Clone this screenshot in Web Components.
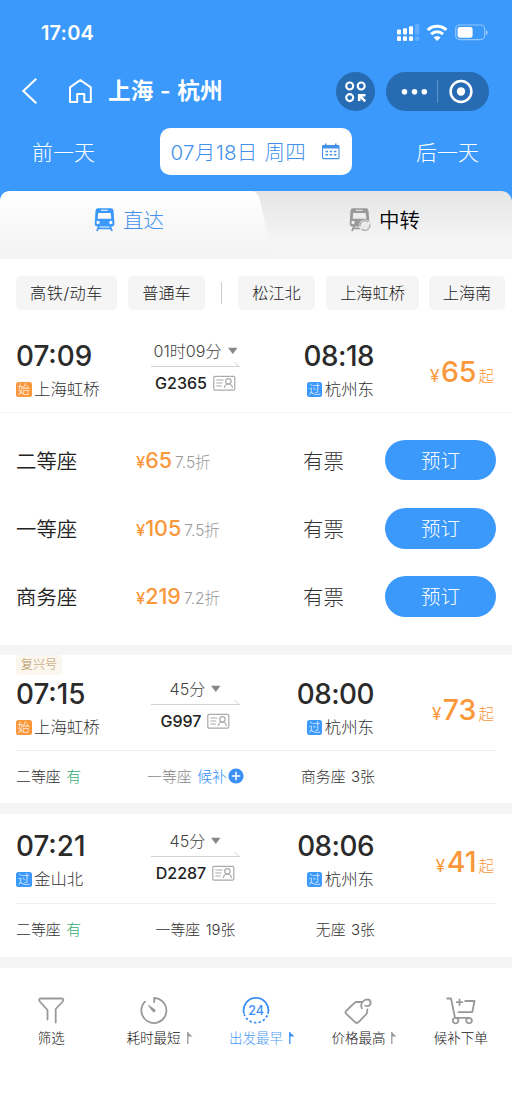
<!DOCTYPE html>
<html lang="zh-CN">
<head>
<meta charset="utf-8">
<title>上海 - 杭州</title>
<style>
html,body{margin:0;padding:0;background:#fff}
body{width:512px;height:1108px;overflow:hidden;font-family:"Inter","Noto Sans CJK SC",sans-serif;font-weight:300;color:#333;--blue:#3b99fc;--orange:#fa973b}
</style>
</head>
<body>
<ticket-page></ticket-page>
<script>
const define = (name, html) => customElements.define(name, class extends HTMLElement {
  constructor() {
    super();
    this.attachShadow({mode: 'open'});
  }
  connectedCallback() {
    const t = document.createElement('template');
    t.innerHTML = '<style>:host{display:block;box-sizing:border-box;white-space:nowrap}*{box-sizing:border-box}svg{display:block;flex:none}</style>' + (typeof html === 'function' ? html(this) : html);
    this.shadowRoot.replaceChildren(t.content.cloneNode(true));
  }
});

define('status-bar', `
<style>
:host{display:flex;height:66px;align-items:center;justify-content:space-between;padding:0 24px 0 41px;color:#fff}
b{font-size:20px;font-weight:600;letter-spacing:.15px}
</style>
<b>17:04</b>
<svg width="92" height="20" viewBox="396 23 92 20">
 <g fill="#fff"><rect x="397" y="29.5" width="4" height="5" rx="1"/><rect x="403" y="28.3" width="4" height="6.2" rx="1"/><rect x="409" y="26.3" width="4" height="8.2" rx="1"/><rect x="397" y="36.3" width="4" height="4.7" rx="1"/><rect x="403" y="36.3" width="4" height="4.7" rx="1"/><rect x="409" y="36.3" width="4" height="4.7" rx="1"/>
 <g opacity=".2"><rect x="415" y="24.3" width="4.3" height="10.2" rx="1"/><rect x="415" y="36.3" width="4.3" height="4.7" rx="1.5"/></g></g>
 <g fill="none" stroke="#fff" stroke-width="3"><path d="M427.8 30a13.3 13.3 0 0 1 18.6 0"/><path d="M431.2 34.1a8.6 8.6 0 0 1 11.8 0"/></g><path d="M433.6 37.6a5 5 0 0 1 7 0L437.1 41z" fill="#fff"/>
 <rect x="455.7" y="25" width="29" height="14.6" rx="4" fill="none" stroke="#fff" stroke-opacity=".45" stroke-width="1.2"/><rect x="457.6" y="27" width="15" height="10.7" rx="2.3" fill="#fff"/><path d="M486 30v5q1.7-.6 1.7-2.5T486 30" fill="#fff" opacity=".5"/>
</svg>`);

define('title-bar', `
<style>
:host{display:flex;height:50px;align-items:center;padding:0 23px 0 20px;color:#fff}
b{font-size:22.7px;font-weight:600;margin-left:15px;flex:1;line-height:50px;word-spacing:1px}
.round{width:39px;height:39px;border-radius:50%;background:#276bb3;margin-right:11px}
.caps{width:103px;height:39px;border-radius:20px;background:#276bb3}
</style>
<svg width="20" height="28" viewBox="0 0 20 28"><path d="M16.3 1.8 3.3 14 16.3 26.3" fill="none" stroke="#fff" stroke-width="2.1"/></svg>
<svg style="margin-left:27px" width="26" height="28" viewBox="67 77 26 28"><path d="M70 87.4 80.3 80 90.8 87.4V102H84.3V94H77.2V102H70Z" fill="none" stroke="#fff" stroke-width="2" stroke-linejoin="round"/></svg>
<b>上海 - 杭州</b>
<svg class="round" viewBox="0 0 39 39"><g fill="none" stroke="#fff" stroke-width="2.1"><circle cx="13.7" cy="14" r="3.5"/><circle cx="25.2" cy="14" r="3.5"/><circle cx="13.7" cy="25.6" r="3.5"/><path stroke-width="2.6" d="M23.2 29v-5.8H29.5M23.2 23.2l6 6.2"/></g></svg>
<svg class="caps" viewBox="0 0 103 39"><g fill="#fff"><circle cx="18.5" cy="19.7" r="2.8"/><circle cx="28.5" cy="19.7" r="2.8"/><circle cx="38.3" cy="19.7" r="2.8"/><circle cx="75" cy="19.5" r="4.2"/></g><circle cx="75" cy="19.5" r="10.4" fill="none" stroke="#fff" stroke-width="2.5"/><path d="M51.5 8v23" stroke="#5e93ca" stroke-width="1"/></svg>`);

define('date-bar', `
<style>
:host{display:flex;height:47px;margin-top:12px;align-items:center;justify-content:space-between;padding:0 33px 0 32px;color:#fff;font-size:21px}
.box{width:192px;height:47px;border-radius:10px;background:#fff;color:#4391ea;display:flex;align-items:center;padding-left:10.5px;font-size:20.5px;margin-left:1px;letter-spacing:.3px;word-spacing:.8px}
span{padding-bottom:2px}
svg{margin-left:15px}
</style>
<span>前一天</span>
<div class="box"><span>07月18日 周四</span>
<svg width="20" height="18" viewBox="0 0 20 18"><rect x="1.5" y="2.6" width="16.5" height="13" rx="1" fill="none" stroke="#4391ea" stroke-width="1.1"/><path d="M1.5 2.5h16.5v3H1.5z" fill="#4391ea"/><path d="M4.7.5v3M14.8.5v3" stroke="#4391ea" stroke-width="1.5"/><path d="M4.5 8.6h11M4.5 11.8h11" stroke="#4391ea" stroke-width="1.5" stroke-dasharray="2.5 1.7"/></svg></div>
<span>后一天</span>`);

define('route-tabs', `
<style>
:host{display:flex;height:68px;background:linear-gradient(#e5e5e5,#f5f5f5 76%);border-radius:11px 11px 0 0;position:relative}
.shape{position:absolute;left:0;top:0}
div{position:relative;width:256px;height:56px;display:flex;align-items:center;padding-left:93px;font-size:20.5px;color:#000;font-weight:350}
div.on{color:#4391ea;font-weight:300}
span{margin-left:7px;padding-bottom:1px}
</style>
<svg class="shape" width="270" height="68"><defs><linearGradient id="g" x2="0" y2="1"><stop stop-color="#fff"/><stop offset=".82" stop-color="#f4f4f4"/></linearGradient></defs><path d="M0 68V11Q0 0 11 0H250Q258 0 260 9L267 42Q269 49 270 51V68Z" fill="url(#g)"/></svg>
<div class="on"><svg width="23" height="26" viewBox="93 206 23 26"><path fill-rule="evenodd" fill="#3b99fc" d="M98 208.3h13q2.3 0 2.5 2.4l1 13.4q0 2.4-2.4 2.4H97q-2.4 0-2.3-2.4l.8-13.4q.2-2.4 2.5-2.4M101 209.7v1h6.8v-1ZM98.2 213l-.5 5.8h13.6l-.6-5.8ZM98 220.8a1.7 1.7 0 1 0 .1 3.4a1.7 1.7 0 1 0-.1-3.4m12.8 0a1.7 1.7 0 1 0 .1 3.4a1.7 1.7 0 1 0-.1-3.4"/><path d="M99 226l-2 5M110 226l2 5M98.5 228.3h12" stroke="#3b99fc" stroke-width="1.8"/></svg><span>直达</span></div>
<div><svg width="23" height="26" viewBox="94 206 23 26"><path fill-rule="evenodd" fill="#999" d="M98 208.3h13q2.3 0 2.5 2.4l1 13.4q0 2.4-2.4 2.4H97q-2.4 0-2.3-2.4l.8-13.4q.2-2.4 2.5-2.4M101 209.7v1h6.8v-1ZM98.2 213l-.5 5.8h13.6l-.6-5.8ZM98 220.8a1.7 1.7 0 1 0 .1 3.4a1.7 1.7 0 1 0-.1-3.4"/><path d="M99 226l-2 5M98.5 228.3h12" stroke="#999" stroke-width="1.8"/><circle cx="110" cy="225.5" r="6" fill="#e9e9e9"/><path d="M105.2 226.5a4.8 4.8 0 0 1 8-4.5M114.7 224.5a4.8 4.8 0 0 1-8 4.5" fill="none" stroke="#aaa" stroke-width="1.3"/></svg><span>中转</span></div>`);

define('filter-chips', `
<style>
:host{display:flex;height:59px;padding:17px 0 8px 16px;background:#fff}
span{height:34px;line-height:34px;border-radius:5px;background:#f5f5f5;font-size:16.2px;text-align:center;flex:none;margin-right:11px;color:#222}
i{flex:none;width:1px;height:22px;background:#ccc;margin:6px 16px 0 5px}
</style>
<span style="width:101px;letter-spacing:.5px">高铁/动车</span><span style="width:77px">普通车</span><i></i><span style="width:77px">松江北</span><span style="width:93px;margin-right:10px">上海虹桥</span><span style="width:76px">上海南</span>`);

define('station-name', el => `
<style>
:host{display:flex;align-items:center;font-size:16.4px;line-height:24px;color:#333}
i{font-style:normal;width:15.5px;height:15.5px;border-radius:2.5px;background:${el.getAttribute('kind') === '始' ? 'var(--orange)' : 'var(--blue)'};color:#fff;font-size:12px;line-height:16px;text-align:center;margin:1px 2.5px 0 0}
</style><i>${el.getAttribute('kind')}</i><slot></slot>`);

define('train-info', el => {
  const a = n => el.getAttribute(n);
  return `
<style>
:host{display:grid;grid-template-columns:135px 89px 135px 121px;height:94px;padding:0 16px}
.t{font-size:27.8px;font-weight:500;line-height:36px;color:#2b2b2b;margin-top:20px;height:36px}
.end .t{letter-spacing:-.5px}
.end{display:flex;flex-direction:column;align-items:flex-end;padding-right:1px}
station-name{margin-top:3px}
.mid{display:flex;flex-direction:column;align-items:center;margin-top:20px}
.d{font-size:16.1px;line-height:26px;height:26px;display:flex;align-items:center;color:#444}
.d svg{margin-left:6px}
.line{margin-top:-2px}
.n{font-size:16px;font-weight:500;line-height:26px;display:flex;align-items:center;color:#222;margin-top:2px}
.n svg{margin-left:6px}
.p{display:flex;align-items:baseline;justify-content:flex-end;color:var(--orange);padding:36px 2px 0 0;line-height:36px}
.p b{font-weight:500;font-size:28.5px;margin:0 2px 0 1.5px}.p i{font-style:normal;font-size:17px;font-weight:400}.p span{font-size:15.5px}
</style>
<div><div class="t">${a('from-time')}</div><station-name kind="${a('from-kind')}">${a('from')}</station-name></div>
<div class="mid"><div class="d">${a('duration')}<svg width="10" height="8"><path d="M0 .8h9.5L4.8 7z" fill="#888"/></svg></div>
<svg class="line" width="89" height="6"><path d="M0 4.5h88.5M83.5.5l5 4" fill="none" stroke="#d2d2d2"/></svg>
<div class="n">${a('no')}<svg width="23" height="17" viewBox="0 0 23 17"><g fill="none" stroke="#aaa" stroke-width="1.2"><rect x=".8" y="1.3" width="21" height="13.8" rx="1.3"/><path d="M3.3 5h7.2M3.3 8h6M3.3 11h5.5"/><circle cx="15.4" cy="6.3" r="2.7"/><path d="M11.3 13q.4-3.6 4.1-4 3.7.4 4.1 4"/></g></svg></div></div>
<div class="end"><div class="t">${a('to-time')}</div><station-name kind="过">${a('to')}</station-name></div>
<div class="p"><i>¥</i><b>${a('price')}</b><span>起</span></div>`;
});

define('seat-row', el => `
<style>
:host{display:flex;height:68.3px;align-items:center;padding:0 16px;font-size:20.4px;color:#222}
.name{width:120px;font-weight:350;padding-bottom:1px}.price{width:167px;display:flex;align-items:baseline;color:var(--orange);padding-bottom:1px}
.price i{font-style:normal;font-size:16.5px;font-weight:500}.price b{font-size:21.5px;font-weight:500}
.price span{font-size:15.5px;color:#999;margin-left:3px}
.left{width:82px;color:#333;padding-bottom:1px}
button{all:unset;width:111px;height:40.5px;border-radius:21px;background:var(--blue);color:#fff;font-size:19.5px;text-align:center;line-height:42px}
</style>
<div class="name">${el.getAttribute('name')}</div><div class="price"><i>¥</i><b>${el.getAttribute('price')}</b><span>${el.getAttribute('off')}</span></div><div class="left">有票</div><button>预订</button>`);

define('seat-summary', `
<style>
:host{display:grid;grid-template-columns:135px 89px 135px;margin:0 16px;height:53px;line-height:53px;border-top:1px solid #f0f0f0;font-size:14.9px}
div{display:flex;justify-content:center}.l{justify-content:start}.r{justify-content:end}
</style><div class="l"><slot name="a"></slot></div><div><slot name="b"></slot></div><div class="r"><slot name="c"></slot></div>`);

define('seat-left', el => `
<style>
:host{display:flex;align-items:center}
span{margin-left:5.5px}
:host([state=have]) span{color:#31ad73}
:host([state=wait]){color:#888}:host([state=wait]) span{color:#2f8df5}
svg{margin:-3px 0 0 1px}
</style><slot></slot><span>${el.getAttribute('left')}</span>${el.getAttribute('state') === 'wait' ? '<svg width="16" height="16"><circle cx="8" cy="8" r="7.6" fill="#3b8ff2"/><path d="M8 3.8v8.4M3.8 8h8.4" stroke="#fff" stroke-width="1.5"/></svg>' : ''}`);

define('nav-item', el => `
<style>
:host{flex:1 1 0;display:flex;flex-direction:column;align-items:center;font-size:13.5px;color:#111;padding-top:27px}
:host([active]){color:#4b99f3}
div{position:relative;line-height:20px;margin-top:3px;color:inherit}
.flag{position:absolute;right:-12px;top:4px}
</style>
<slot name="icon"></slot><div><slot></slot>${el.hasAttribute('sort') ? `<svg class="flag" width="7" height="13"><path d="M1.8 0v12" stroke="${el.hasAttribute('active') ? '#3b8ff2' : '#999'}" stroke-width="1.3"/><path d="M2 .5 6.5 4.5H2z" fill="${el.hasAttribute('active') ? '#3b8ff2' : '#999'}"/></svg>` : ''}</div>`);

define('bottom-nav', `
<style>
:host{display:flex;height:140px;background:#fff}
svg{width:30px;height:30px;fill:none;stroke:#999;stroke-width:1.8;stroke-linecap:round;stroke-linejoin:round}
text{stroke:none;fill:#3b8ff2;font:500 12.5px Inter}
</style>
<nav-item><svg slot="icon"><path d="M11.5 24.5V15L3.8 6.5Q2.2 3.5 5 3.5H25.5Q28.3 3.5 26.7 6.5L19.7 14V27.5" /></svg>筛选</nav-item>
<nav-item sort><svg slot="icon" viewBox="0 0 30 30"><path d="M15.2 7V3A12.5 12.5 0 1 1 6 6.7"/><path d="M9.7 10.5 15.8 14.7a1.2 1.2 0 1 1-1.8 1.8z" fill="#999" stroke-width="1"/></svg>耗时最短</nav-item>
<nav-item sort active><svg slot="icon"><g stroke="#3b8ff2"><path d="M2.9 18A12.4 12.4 0 1 1 27.1 18" /><path d="M26 21A12.4 12.4 0 0 1 3.5 20" stroke-dasharray="1 3.6"/></g><text x="15" y="19.7" text-anchor="middle">24</text></svg>出发最早</nav-item>
<nav-item sort><svg slot="icon"><path d="M18.8 7H13.5Q12.3 7 11.5 7.8L3 16Q1.9 17.3 3 18.6L12.3 27.3Q14 28.7 15.6 27.2L23.8 18.5 24.4 14.5M18.8 13.3C16.8 8 21 4.3 24.6 4.3 28.4 4.6 28.6 9.8 25.3 11Q23.5 11.5 22.3 10.6"/></svg>价格最高</nav-item>
<nav-item><svg slot="icon"><path d="M1.2 3.5H5L9 22.8H23M9.5 22.8A2.8 2.8 0 1 0 9.6 22.8M23 22.8A2.8 2.8 0 1 0 23.1 22.8M13.5 4.5V10M10.8 7.2H16.3M19.2 6H28.5L26.3 17.2H12.5"/></svg>候补下单</nav-item>`);

define('ticket-page', `
<style>
:host{width:512px;height:1108px;overflow:hidden;background:#fff}
header{height:191px;background:var(--blue)}
.tabs{background:var(--blue)}
.band{height:11px;background:#f5f5f5}
.rows + .band{height:10.5px}
.rows{border-top:1px solid #f5f5f5;padding-top:13px;height:232.5px}
.tag{position:absolute;z-index:1;left:16px;top:0;width:46px;height:20px;border-radius:4px;background:#fbf7ef;color:#b9915b;font-size:12.2px;line-height:20px;text-align:center}
.card{position:relative}
.second{padding-top:1px}
.third train-info{height:95px;margin-top:-6px}
.third seat-summary{height:54px}
</style>
<header><status-bar></status-bar><title-bar></title-bar><date-bar></date-bar></header>
<div class="tabs"><route-tabs></route-tabs></div>
<filter-chips></filter-chips>
<train-info from-time="07:09" from-kind="始" from="上海虹桥" duration="01时09分" no="G2365" to-time="08:18" to="杭州东" price="65"></train-info>
<div class="rows"><seat-row name="二等座" price="65" off="7.5折"></seat-row><seat-row name="一等座" price="105" off="7.5折"></seat-row><seat-row name="商务座" price="219" off="7.2折"></seat-row></div>
<div class="band"></div>
<div class="card second"><div class="tag">复兴号</div>
<train-info from-time="07:15" from-kind="始" from="上海虹桥" duration="45分" no="G997" to-time="08:00" to="杭州东" price="73"></train-info>
<seat-summary><seat-left slot="a" state="have" left="有">二等座</seat-left><seat-left slot="b" state="wait" left="候补">一等座</seat-left><seat-left slot="c" left="3张">商务座</seat-left></seat-summary></div>
<div class="band"></div>
<div class="card third"><train-info from-time="07:21" from-kind="过" from="金山北" duration="45分" no="D2287" to-time="08:06" to="杭州东" price="41"></train-info>
<seat-summary><seat-left slot="a" state="have" left="有">二等座</seat-left><seat-left slot="b" left="19张">一等座</seat-left><seat-left slot="c" left="3张">无座</seat-left></seat-summary></div>
<div class="band"></div>
<bottom-nav></bottom-nav>`);
</script>
</body>
</html>
